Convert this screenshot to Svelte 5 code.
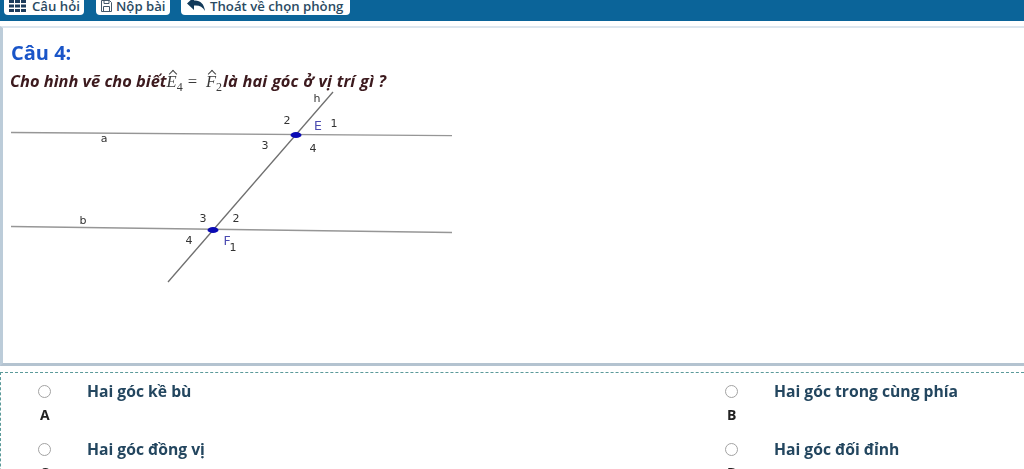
<script lang="ts">
    const options = [
        { letter: 'A', text: 'Hai góc kề bù' },
        { letter: 'B', text: 'Hai góc trong cùng phía' },
        { letter: 'C', text: 'Hai góc đồng vị' },
        { letter: 'D', text: 'Hai góc đối đỉnh' }
    ];

    // label positions read off the figure, centre x / baseline y
    const labels = [
        { t: 'h', x: 317, y: 102 },
        { t: 'a', x: 104, y: 142 },
        { t: 'b', x: 83, y: 224 },
        { t: '2', x: 287, y: 124 },
        { t: '1', x: 334, y: 127 },
        { t: '3', x: 265, y: 149 },
        { t: '4', x: 313, y: 152 },
        { t: '3', x: 203, y: 222 },
        { t: '2', x: 236, y: 222 },
        { t: '4', x: 189, y: 244 },
        { t: '1', x: 233, y: 251 }
    ];
</script>

<div class="page">
    <nav class="toolbar">
        <button class="pill first">
            <svg class="icon" width="17" height="12" viewBox="0 0 17 12">
                <path d="M0 0h5v3H0zM6 0h5v3H6zM12 0h5v3h-5zM0 4.500h5v3H0zM6 4.500h5v3H6zM12 4.500h5v3h-5zM0 9h5v3H0zM6 9h5v3H6zM12 9h5v3h-5z" fill="#1d3c5c" />
            </svg>
            Câu hỏi
        </button>
        <button class="pill second">
            <svg class="icon" width="11" height="12" viewBox="0 0 11 12">
                <path d="M.5.5h8l2 2v9H.5zM3 .5v3h5v-3M2.500 11.500v-5h6v5" fill="none" stroke="#44586a" />
            </svg>
            Nộp bài
        </button>
        <button class="pill third">
            <svg class="icon arrow" width="18" height="14" viewBox="0 0 18 14">
                <path d="M7 0v3.500c6-.5 10 3 11 10.500-2.500-4.500-6-6-11-5.500V13L0 6.500z" fill="#123a5a" />
            </svg>
            Thoát về chọn phòng
        </button>
    </nav>

    <section class="question">
        <h2>Câu 4:</h2>
        <p class="prompt">
            Cho hình vẽ cho biết<span class="math"><span class="hat">E</span><sub>4</sub> = <span class="hat gap">F</span><sub>2</sub></span><span class="tail">là hai góc ở vị trí gì ?</span>
        </p>
        <svg class="figure" width="460" height="196" viewBox="0 90 460 196">
            <g stroke="#969696" stroke-width="1.300" fill="none">
                <path d="M11 132.500 452 135.700" />
                <path d="M11 226.500 452 232.500" />
                <path d="M333 92 168 282" stroke="#6f6f6f" />
            </g>
            <ellipse cx="296" cy="135" rx="5.500" ry="3" fill="#0a0ab4" />
            <ellipse cx="213" cy="230" rx="5.500" ry="3" fill="#0a0ab4" />
            {#each labels as label}
                <text class="label" x={label.x} y={label.y}>{label.t}</text>
            {/each}
            <text class="point" x="318" y="130">E</text>
            <text class="point" x="227" y="245">F</text>
        </svg>
    </section>

    <section class="answers">
        {#each options as option}
            <div class="option">
                <label class="choice">
                    <span class="radio"></span>
                    <span class="text">{option.text}</span>
                </label>
                <b class="letter">{option.letter}</b>
            </div>
        {/each}
    </section>
</div>

<style>
    :global(body) {
        margin: 0;
        background: #fff;
        overflow: hidden;
    }

    .page {
        height: 469px;
        overflow: hidden;
        font-family: "Open Sans", "Noto Sans", sans-serif;
        filter: blur(0.4px);
    }

    .toolbar {
        display: flex;
        align-items: flex-end;
        height: 21px;
        padding: 0 0 6px 4px;
        box-sizing: border-box;
        overflow: hidden;
        background: #0b6499;
    }

    .pill {
        display: flex;
        flex: none;
        align-items: center;
        height: 24px;
        padding: 6px 0 0;
        box-sizing: border-box;
        border: 0;
        border-radius: 4px;
        background: #fff;
        color: #2a4a62;
        font: 600 13.200px "Open Sans", sans-serif;
    }

    .first {
        width: 80px;
        padding-left: 5px;
        gap: 6px;
    }

    .second {
        width: 74px;
        margin-left: 12px;
        padding-left: 5px;
        gap: 4px;
    }

    .third {
        width: 169px;
        margin-left: 11px;
        padding-left: 6px;
        gap: 5px;
    }

    .icon {
        flex: none;
    }

    .arrow {
        margin-top: -5px;
    }

    .question {
        height: 340px;
        margin-top: 5px;
        padding-top: 13px;
        box-sizing: border-box;
        overflow: hidden;
        border-top: 2px solid #dde6ee;
        border-left: 3px solid #bcccd9;
        border-bottom: 3px solid #b4c3d0;
    }

    h2 {
        margin: 0 0 0 8px;
        color: #1a55c8;
        font-size: 20px;
        line-height: 24px;
        font-weight: 700;
    }

    .prompt {
        display: flex;
        align-items: baseline;
        height: 22px;
        margin: 5px 0 0 7px;
        white-space: pre;
        color: #3c1a1e;
        font-size: 16.400px;
        line-height: 22px;
        font-weight: 700;
        font-style: italic;
    }

    .math {
        margin-right: 1px;
        color: #3a3a3a;
        font: italic 400 16.500px "Liberation Serif", serif;
    }

    .math sub {
        font-size: 12px;
        font-style: normal;
        line-height: 0;
    }

    .tail {
        word-spacing: 0.6px;
    }

    .hat {
        position: relative;
        display: inline-block;
    }

    .hat::before {
        content: "";
        position: absolute;
        left: 3px;
        top: -1px;
        width: 5px;
        height: 5px;
        border-top: 1px solid #444;
        border-left: 1px solid #444;
        transform: rotate(45deg);
    }

    .gap {
        margin-left: 4px;
    }

    .figure {
        display: block;
        margin: -2px 0 0 -3px;
    }

    .label {
        fill: #333;
        text-anchor: middle;
        font: 400 11px "DejaVu Sans", sans-serif;
    }

    .point {
        fill: #4a4ab0;
        text-anchor: middle;
        font: 400 12.500px "DejaVu Sans", sans-serif;
    }

    .answers {
        display: grid;
        grid-template-columns: 687px 1fr;
        grid-auto-rows: 58px;
        margin-top: 6px;
        padding-top: 8px;
        border-top: 1px dashed #5b9a9a;
        border-left: 1px dashed #5b9a9a;
        color: #23465f;
    }

    .option {
        padding-left: 37px;
    }

    .choice {
        display: flex;
        align-items: center;
        height: 20px;
    }

    .radio {
        flex: none;
        width: 11px;
        height: 11px;
        border: 1.500px solid #a2a2a2;
        border-radius: 50%;
        background: #fff;
    }

    .text {
        margin-left: 36px;
        font-size: 15.700px;
        font-weight: 700;
    }

    .letter {
        display: block;
        margin: 4px 0 0 2px;
        color: #222;
        font-size: 14px;
        line-height: 20px;
    }
</style>
